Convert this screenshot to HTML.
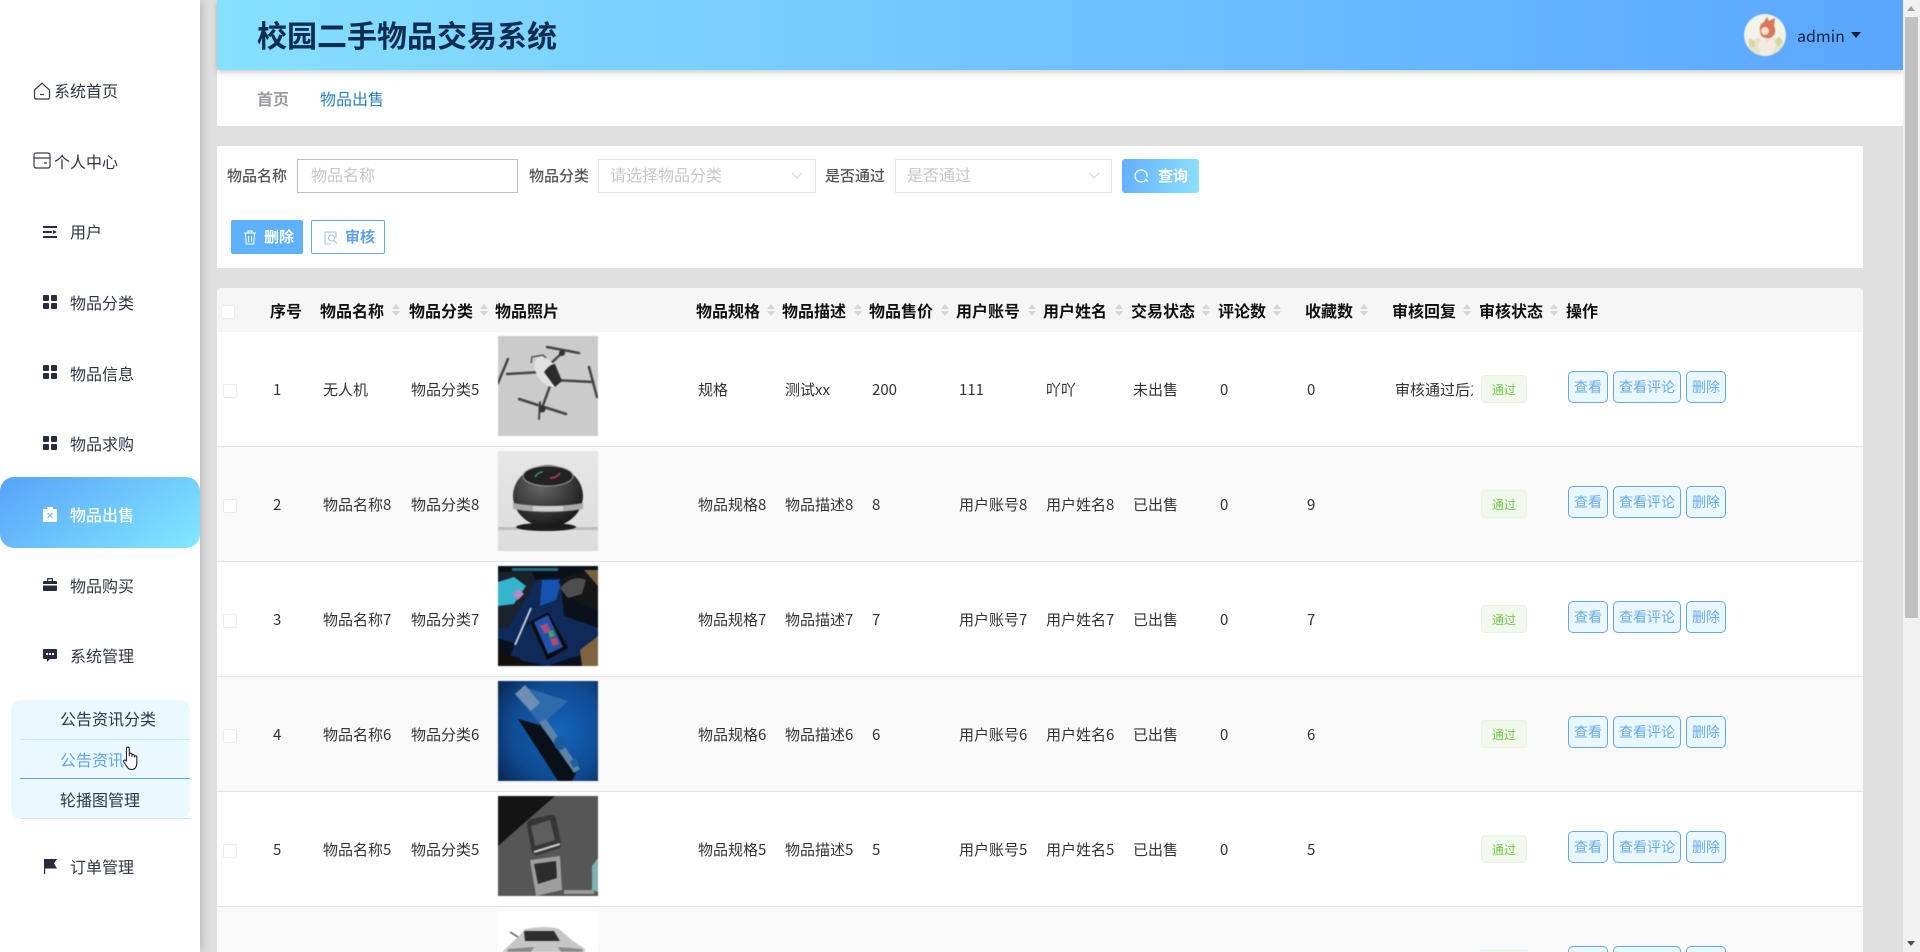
<!DOCTYPE html>
<html lang="zh"><head><meta charset="utf-8"><title>校园二手物品交易系统</title>
<style>
*{box-sizing:border-box}
html,body{margin:0;padding:0;width:1920px;height:952px;overflow:hidden;background:#e0e0e0;font-family:"Noto Sans CJK SC","Liberation Sans",sans-serif;color:#333}
#w{position:relative;width:1920px;height:952px;overflow:hidden;background:#e0e0e0}
.a{position:absolute;white-space:nowrap}
#side{position:absolute;left:0;top:0;width:200px;height:952px;background:#fff;box-shadow:3px 0 8px rgba(0,0,0,.16);z-index:5}
.m{position:absolute;left:70px;font-size:16px;line-height:24px;color:#2f3646;white-space:nowrap}
.i{position:absolute;left:43px}
#act{position:absolute;left:0;top:477px;width:200px;height:71px;border-radius:14px;background:linear-gradient(145deg,#58a2fa,#82e9ff)}
#sub{position:absolute;left:11px;top:700px;width:179px;height:119px;background:#e9f9ff;border-radius:10px}
.s{position:absolute;left:9px;width:170px;height:40px;border-bottom:1px solid #cfe6ee;font-size:16px;line-height:37px;padding-left:40px;color:#2f3646;white-space:nowrap}
#hd{position:absolute;left:217px;top:0;width:1686px;height:70px;background:linear-gradient(90deg,#86e0ff,#5aa6ff);box-shadow:0 2px 6px rgba(0,0,0,.22);z-index:3}
#bc{position:absolute;left:217px;top:70px;width:1686px;height:56px;background:#fff}
#sp{position:absolute;left:217px;top:146px;width:1646px;height:122px;background:#fff}
.lb{position:absolute;top:159px;line-height:34px;font-size:15px;font-weight:500;color:#555;white-space:nowrap}
.box{position:absolute;top:159px;height:34px;background:#fff;border:1px solid #e4e7ed;font-size:16px;line-height:28px;color:#c4c7cc;padding-left:11px;white-space:nowrap}
#th{position:absolute;left:217px;top:288px;width:1646px;height:44px;background:#f6f6f6;border-radius:4px 4px 0 0}
.h{position:absolute;top:288px;line-height:44px;font-size:16px;font-weight:700;color:#111;white-space:nowrap}
.so{position:absolute;top:304px;width:8px;height:11px}
.so:before{content:"";position:absolute;left:0;top:0;border-left:4px solid transparent;border-right:4px solid transparent;border-bottom:5px solid #d2d5d9}
.so:after{content:"";position:absolute;left:0;top:7px;border-left:4px solid transparent;border-right:4px solid transparent;border-top:5px solid #d2d5d9}
.cb{position:absolute;width:14px;height:14px;background:#fff;border:1px solid #ececec;border-radius:2px}
.r{position:absolute;left:217px;width:1646px;height:115px;background:#fff;border-bottom:1px solid #e4e4e4}
.r.e{background:#f9f9f9}
.r span{position:absolute;top:0;line-height:115px;font-size:15px;color:#333;white-space:nowrap}
.r svg{position:absolute;left:281px;top:4px;filter:blur(.45px)}
.r .cb{left:6px;top:52px}
.r b{position:absolute;top:39px;height:32px;border:1px solid #66a6e8;border-radius:5px;background:#e9f8ff;color:#68aaef;font-size:14px;font-weight:400;line-height:31px;text-align:center}
.r i{position:absolute;left:1264px;top:43px;width:46px;height:28px;background:#f0f9eb;border:1px solid #e8f4e0;border-radius:4px;color:#74c64c;font-size:12px;font-style:normal;line-height:28px;text-align:center}
.c1{left:56px}.c2{left:106px}.c3{left:194px}.c5{left:481px}.c6{left:568px}.c7{left:655px}.c8{left:742px}.c9{left:829px}.c10{left:916px}.c11{left:1003px}.c12{left:1090px}
.b1{left:1351px;width:40px}.b2{left:1396px;width:68px}.b3{left:1469px;width:40px}
.r.last{height:45px;border-bottom:0;overflow:hidden}
.r.last b{height:6px;border-bottom:0;overflow:hidden;border-radius:5px 5px 0 0}
.r.last i{height:2px;border-bottom:0;overflow:hidden}
#sb{position:absolute;left:1903px;top:0;width:17px;height:952px;background:#f1f1f1;z-index:6}
</style></head><body><div id="w">

<div id="side">
<svg class="a" style="left:33px;top:82px" width="18" height="18" viewBox="0 0 18 18" fill="none" stroke="#333a4a" stroke-width="1.2"><path d="M1.5 8 9 1.2 16.5 8v7.5a1.5 1.5 0 0 1-1.5 1.5H3a1.5 1.5 0 0 1-1.5-1.5z"/><path d="M7 12.5h4"/></svg>
<div class="a" style="left:54px;top:78px;font-size:16px;line-height:24px;color:#2f3646">系统首页</div>
<svg class="a" style="left:33px;top:152px" width="18" height="17" viewBox="0 0 18 17" fill="none" stroke="#333a4a" stroke-width="1.2"><rect x="1" y="1" width="16" height="15" rx="2"/><path d="M1 6h16M11 11h3"/></svg>
<div class="a" style="left:54px;top:149px;font-size:16px;line-height:24px;color:#2f3646">个人中心</div>

<svg class="i" style="top:226px" width="14" height="12" viewBox="0 0 14 12" fill="#262c3e"><rect width="14" height="2"/><rect y="5" width="9" height="2"/><path d="M10 4l4 2-4 2z"/><rect y="10" width="14" height="2"/></svg>
<div class="m" style="top:219px">用户</div>
<svg class="i" style="top:295px" width="14" height="14" viewBox="0 0 14 14" fill="#262c3e"><rect width="6" height="6" rx="1"/><rect x="8" width="6" height="6" rx="1"/><rect y="8" width="6" height="6" rx="1"/><rect x="8" y="8" width="6" height="6" rx="1"/></svg>
<div class="m" style="top:290px">物品分类</div>
<svg class="i" style="top:365px" width="14" height="14" viewBox="0 0 14 14" fill="#262c3e"><rect width="6" height="6" rx="1"/><rect x="8" width="6" height="6" rx="1"/><rect y="8" width="6" height="6" rx="1"/><rect x="8" y="8" width="6" height="6" rx="1"/></svg>
<div class="m" style="top:361px">物品信息</div>
<svg class="i" style="top:436px" width="14" height="14" viewBox="0 0 14 14" fill="#262c3e"><rect width="6" height="6" rx="1"/><rect x="8" width="6" height="6" rx="1"/><rect y="8" width="6" height="6" rx="1"/><rect x="8" y="8" width="6" height="6" rx="1"/></svg>
<div class="m" style="top:431px">物品求购</div>
<div id="act"></div>
<svg class="i" style="top:507px" width="14" height="15" viewBox="0 0 14 15"><path fill="#fff" d="M1 2h3V0h6v2h3a1 1 0 0 1 1 1v11a1 1 0 0 1-1 1H1a1 1 0 0 1-1-1V3a1 1 0 0 1 1-1z"/><path stroke="#6cb8f5" stroke-width="1.2" d="M4.5 6l5 5m0-5l-5 5"/></svg>
<div class="m" style="top:502px;color:#fff;font-weight:500">物品出售</div>
<svg class="i" style="top:578px" width="14" height="13" viewBox="0 0 14 13" fill="#262c3e"><path d="M4 3V1a1 1 0 0 1 1-1h4a1 1 0 0 1 1 1v2h3a1 1 0 0 1 1 1v2H0V4a1 1 0 0 1 1-1zM5.300 1.300V3h3.400V1.300zM0 7.500h14V12a1 1 0 0 1-1 1H1a1 1 0 0 1-1-1z"/></svg>
<div class="m" style="top:573px">物品购买</div>
<svg class="i" style="top:649px" width="14" height="13" viewBox="0 0 14 13" fill="#262c3e"><path fill-rule="evenodd" d="M1 0h12a1 1 0 0 1 1 1v8a1 1 0 0 1-1 1H7l-3 3v-3H1a1 1 0 0 1-1-1V1a1 1 0 0 1 1-1zM3 4v2h2V4zm3 0v2h2V4zm3 0v2h2V4z"/></svg>
<div class="m" style="top:643px">系统管理</div>
<div id="sub">
<div class="s" style="top:0">公告资讯分类</div>
<div class="s" style="top:39px;color:#5fa6ee;border-bottom-color:#64a5e6;line-height:41px">公告资讯</div>
<div class="s" style="top:79px;line-height:41px">轮播图管理</div>
</div>
<svg class="a" style="left:123px;top:746px" width="16" height="25" viewBox="0 0 16 25"><path fill="#fff" stroke="#222" stroke-width="1.100" stroke-linejoin="round" d="M3.500 15V2.500a1.400 1.400 0 0 1 2.800 0V10V8.500a1.300 1.300 0 0 1 2.600 0V10.500V9.500a1.300 1.300 0 0 1 2.500 0v1.500a1.200 1.200 0 0 1 2.400 0v6c0 4-2 6.500-5 6.500S5 22 3.500 20l-2.700-4c-.8-1.400 1-2.500 2-1.500z"/></svg>
<svg class="i" style="top:859px" width="14" height="15" viewBox="0 0 14 15" fill="#262c3e"><path d="M1 0h13l-3 4.500L14 9.500H2.200V15H1z"/></svg>
<div class="m" style="top:854px">订单管理</div>
</div>

<div id="hd">
<div class="a" style="left:40px;top:12px;font-size:30px;line-height:44px;font-weight:700;color:#0f2d50">校园二手物品交易系统</div>
<svg class="a" style="left:1527px;top:14px;filter:blur(.4px)" width="42" height="42" viewBox="0 0 42 42"><defs><clipPath id="av"><circle cx="21" cy="21" r="21"/></clipPath></defs><g clip-path="url(#av)"><rect width="42" height="42" fill="#f1f2e8"/><path d="M4 32q6-10 14-7l8 0q8-4 14 6v11H4z" fill="#e8e2cc"/><path d="M14 30l5-7 4 5 5-5 4 8-5 11H17z" fill="#f2ebe0"/><path d="M16 17q-1-7 4-9l3-5 2 4 6-3-1 8q3 6-1 10-3 3-7 2-6-1-6-7z" fill="#d9775a"/><circle cx="21" cy="17" r="4" fill="#f6dfcd"/><path d="M5 24l6 4-1 6-5-3zM35 22l4 6-5 5-3-5z" fill="#d5d99e"/></g></svg>
<div class="a" style="left:1580px;top:22px;font-size:16px;line-height:26px;color:#0f2340">admin</div>
<div class="a" style="left:1634px;top:32px;border-left:5px solid transparent;border-right:5px solid transparent;border-top:6px solid #0a1a30"></div>
</div>

<div id="bc">
<div class="a" style="left:40px;top:16px;font-size:16px;line-height:24px;font-weight:700;color:#9a9da3">首页</div>
<div class="a" style="left:103px;top:16px;font-size:16px;line-height:24px;font-weight:400;color:#2b80c2">物品出售</div>
</div>

<div id="sp"></div>
<div class="lb" style="left:227px">物品名称</div>
<div class="box" style="left:297px;width:221px;border-color:#bcbcbc;padding-left:13px">物品名称</div>
<div class="lb" style="left:529px">物品分类</div>
<div class="box" style="left:598px;width:218px">请选择物品分类</div>
<svg class="a" style="left:791px;top:172px" width="12" height="8" viewBox="0 0 12 8" fill="none" stroke="#d0d3d8"><path d="M1 1l5 5 5-5"/></svg>
<div class="lb" style="left:825px">是否通过</div>
<div class="box" style="left:895px;width:217px">是否通过</div>
<svg class="a" style="left:1088px;top:172px" width="12" height="8" viewBox="0 0 12 8" fill="none" stroke="#d0d3d8"><path d="M1 1l5 5 5-5"/></svg>
<div class="a" style="left:1122px;top:159px;width:77px;height:34px;border-radius:3px;background:linear-gradient(100deg,#63aeff,#8ce2ff);color:#fff;font-size:15px;font-weight:700;line-height:33px;padding-left:36px">查询</div>
<svg class="a" style="left:1134px;top:167px" width="16" height="16" viewBox="0 0 16 16" fill="none" stroke="#fff" stroke-width="1.200"><path d="M11 13.500A6 6 0 1 1 13 10"/><path d="M11 12l3 2.500"/></svg>
<div class="a" style="left:231px;top:220px;width:72px;height:34px;border-radius:2px;background:#5db1ff;color:#fff;font-size:15px;font-weight:700;line-height:34px;padding-left:33px">删除</div>
<svg class="a" style="left:243px;top:230px" width="14" height="15" viewBox="0 0 14 15" fill="none" stroke="#fff" stroke-width="1"><path d="M1 3h12M5 3V1h4v2M2.500 3l.7 11h7.600l.7-11M5.500 6v6M8.500 6v6"/></svg>
<div class="a" style="left:311px;top:220px;width:74px;height:34px;border-radius:2px;background:#fff;border:1px solid #62a9ee;color:#62a2e8;font-size:15px;font-weight:700;line-height:32px;padding-left:33px">审核</div>
<svg class="a" style="left:324px;top:231px" width="14" height="14" viewBox="0 0 14 14" fill="none" stroke="#a8bdf0" stroke-width="1"><path d="M12 7V1H1v12h6"/><circle cx="7.500" cy="7" r="3"/><path d="M10 9.500l3 3"/></svg>

<div id="th"></div>
<div class="cb" style="left:221px;top:305px"></div>
<div class="h" style="left:270px">序号</div>
<div class="h" style="left:320px">物品名称</div><div class="so" style="left:392px"></div>
<div class="h" style="left:409px">物品分类</div><div class="so" style="left:480px"></div>
<div class="h" style="left:495px">物品照片</div>
<div class="h" style="left:696px">物品规格</div><div class="so" style="left:767px"></div>
<div class="h" style="left:782px">物品描述</div><div class="so" style="left:854px"></div>
<div class="h" style="left:869px">物品售价</div><div class="so" style="left:941px"></div>
<div class="h" style="left:956px">用户账号</div><div class="so" style="left:1028px"></div>
<div class="h" style="left:1043px">用户姓名</div><div class="so" style="left:1115px"></div>
<div class="h" style="left:1131px">交易状态</div><div class="so" style="left:1202px"></div>
<div class="h" style="left:1218px">评论数</div><div class="so" style="left:1273px"></div>
<div class="h" style="left:1305px">收藏数</div><div class="so" style="left:1360px"></div>
<div class="h" style="left:1392px">审核回复</div><div class="so" style="left:1463px"></div>
<div class="h" style="left:1479px">审核状态</div><div class="so" style="left:1550px"></div>
<div class="h" style="left:1566px">操作</div>

<div class="r" style="top:332px"><div class="cb"></div>
<span class="c1">1</span><span class="c2">无人机</span><span class="c3">物品分类5</span>
<svg width="100" height="100" viewBox="0 0 100 100"><rect width="100" height="100" fill="#cbcbcb"/><g stroke="#454545" stroke-linecap="round" fill="none"><path stroke-width="2.500" d="M44 36 9 38M56 44 95 46M52 50 44 72M50 30 64 17"/><path stroke-width="2.500" d="M0 47 10 23M91 31 99 61M21 63 68 78M49 11 81 17"/><path stroke-width="2" d="M42 66 41 83"/></g><ellipse cx="49" cy="36" rx="10" ry="17" transform="rotate(-35 49 36)" fill="#e2e2e4"/><path d="M46 36q6-8 11-8l7 17-7 6z" fill="#2b2b2b"/><path d="M33 27l1-6 11-2 3 3" stroke="#555" stroke-width="1.500" fill="none"/><circle cx="44" cy="73" r="3.500" fill="#333"/><circle cx="64" cy="17" r="3" fill="#333"/></svg>
<span class="c5">规格</span><span class="c6">测试xx</span><span class="c7">200</span><span class="c8">111</span><span class="c9">吖吖</span><span class="c10">未出售</span><span class="c11">0</span><span class="c12">0</span>
<span style="left:1178px;width:78px;overflow:hidden">审核通过后之</span><i>通过</i>
<b class="b1">查看</b><b class="b2">查看评论</b><b class="b3">删除</b></div>

<div class="r e" style="top:447px"><div class="cb"></div>
<span class="c1">2</span><span class="c2">物品名称8</span><span class="c3">物品分类8</span>
<svg width="100" height="100" viewBox="0 0 100 100"><defs><linearGradient id="g1" x1="0" y1="0" x2="0" y2="1"><stop offset="0" stop-color="#e6e6e6"/><stop offset="1" stop-color="#dcdcdc"/></linearGradient><radialGradient id="g2" cx=".4" cy=".3" r=".75"><stop offset="0" stop-color="#6a6a6a"/><stop offset="1" stop-color="#141414"/></radialGradient></defs><rect width="100" height="100" fill="url(#g1)"/><rect y="76" width="100" height="3" fill="#bdbdbd"/><ellipse cx="48" cy="76" rx="30" ry="4" fill="#1c1c1c"/><ellipse cx="50" cy="45" rx="35" ry="31" fill="url(#g2)"/><path d="M15 52q35 6 70 0v6q-35 6-70 0z" fill="#a8a8a8"/><path d="M35 55h30v5H35z" fill="#d0d0d0"/><ellipse cx="50" cy="25" rx="25" ry="10" fill="#222" stroke="#9c9c9c" stroke-width="1"/><path d="M37 26q3-5 8-5" stroke-width="1.500" fill="none" stroke="#2f9a78"/><path d="M52 27q7 0 10-5" stroke-width="1.500" fill="none" stroke="#c43a5a"/></svg>
<span class="c5">物品规格8</span><span class="c6">物品描述8</span><span class="c7">8</span><span class="c8">用户账号8</span><span class="c9">用户姓名8</span><span class="c10">已出售</span><span class="c11">0</span><span class="c12">9</span><i>通过</i>
<b class="b1">查看</b><b class="b2">查看评论</b><b class="b3">删除</b></div>

<div class="r" style="top:562px"><div class="cb"></div>
<span class="c1">3</span><span class="c2">物品名称7</span><span class="c3">物品分类7</span>
<svg width="100" height="100" viewBox="0 0 100 100"><rect width="100" height="100" fill="#0b111b"/><path d="M38 14 62 14 50 46 30 56 18 78 0 72V62z" fill="#0e2a5a"/><path d="M38 14 62 12 66 50 100 62V84L72 92 50 100 12 92 18 74 32 56z" fill="#0f2a58"/><path d="M44 14H64L58 34 42 40z" fill="#1454b0"/><path d="M82 84 100 70V100H84z" fill="#7d6340"/><path d="M0 86 22 92 24 100H0z" fill="#15100c"/><path d="M60 16q18-14 40-8V44L78 36z" fill="#161616"/><path d="M62 22q12-14 26-8l-4 14-14 4z" fill="#4e4e4e"/><path d="M86 4h14v16z" fill="#7a6040"/><path d="M14 2h46v3H14z" fill="#1f6f7e"/><path d="M0 6H34L38 16 10 62H0z" fill="#1a222c"/><path d="M0 16 16 11 28 20 16 38 0 40z" fill="#35b5cc"/><path d="M14 28l7-5 5 5-6 6z" fill="#b58ac8"/><path d="M33 42 17 79" stroke="#cfd4da" stroke-width="1.800"/><path d="M32 56 50 46 70 82 49 94z" fill="#0c0c0c"/><path d="M36 56 50 49 65 81 50 88z" fill="#2352ae"/><path d="M42 60l7-3 4 8-6 3z" fill="#a8497c"/><path d="M52 73l6-2 3 7-6 2z" fill="#b44a6a"/><path d="M50 66l5-2 2 6-5 2z" fill="#41a35a"/></svg>
<span class="c5">物品规格7</span><span class="c6">物品描述7</span><span class="c7">7</span><span class="c8">用户账号7</span><span class="c9">用户姓名7</span><span class="c10">已出售</span><span class="c11">0</span><span class="c12">7</span><i>通过</i>
<b class="b1">查看</b><b class="b2">查看评论</b><b class="b3">删除</b></div>

<div class="r e" style="top:677px"><div class="cb"></div>
<span class="c1">4</span><span class="c2">物品名称6</span><span class="c3">物品分类6</span>
<svg width="100" height="100" viewBox="0 0 100 100"><defs><radialGradient id="g3" cx=".6" cy=".5" r=".8"><stop offset="0" stop-color="#1565bb"/><stop offset=".6" stop-color="#0f4a92"/><stop offset="1" stop-color="#08234a"/></radialGradient></defs><rect width="100" height="100" fill="url(#g3)"/><path d="M20 38 42 44 78 92 74 100H60z" fill="#0a1018"/><path d="M26 6 70 20 46 42 40 40 17 13z" fill="#2e6bab"/><path d="M17 13 27 4 42 22 33 30z" fill="#6e8fb2"/><path d="M41 41 48 38 82 88 76 92z" fill="#5d82a8"/><ellipse cx="62" cy="62" rx="6" ry="7" fill="#1d5a9c"/><path d="M72 80l6-3 3 7-6 3z" fill="#24609f"/></svg>
<span class="c5">物品规格6</span><span class="c6">物品描述6</span><span class="c7">6</span><span class="c8">用户账号6</span><span class="c9">用户姓名6</span><span class="c10">已出售</span><span class="c11">0</span><span class="c12">6</span><i>通过</i>
<b class="b1">查看</b><b class="b2">查看评论</b><b class="b3">删除</b></div>

<div class="r" style="top:792px"><div class="cb"></div>
<span class="c1">5</span><span class="c2">物品名称5</span><span class="c3">物品分类5</span>
<svg width="100" height="100" viewBox="0 0 100 100"><rect width="100" height="100" fill="#565656"/><path d="M0 0H57L0 50z" fill="#141414"/><path d="M32 64 62 60 64 94 38 100z" fill="#9e9e9e"/><path d="M36 68 58 65 59 82 40 88z" fill="#2c2c2c"/><path d="M29 30q-1-5 4-7l19-4q5-1 6 4l5 24q1 5-4 6l-19 6q-5 1-6-3z" fill="#363636"/><path d="M33 30l19-6 5 20-20 6z" fill="#5e5e5e"/><path d="M36 56l26-8" stroke="#d0d0d0" stroke-width="2"/><path d="M66 94h30v4H66z" fill="#9a9a9a"/><path d="M94 70l6-8V96l-6-2z" fill="#80b0b0"/></svg>
<span class="c5">物品规格5</span><span class="c6">物品描述5</span><span class="c7">5</span><span class="c8">用户账号5</span><span class="c9">用户姓名5</span><span class="c10">已出售</span><span class="c11">0</span><span class="c12">5</span><i>通过</i>
<b class="b1">查看</b><b class="b2">查看评论</b><b class="b3">删除</b></div>

<div class="r e last" style="top:907px">
<svg width="100" height="41" viewBox="0 0 100 41"><rect width="100" height="41" fill="#fff"/><path d="M20 26 27 18q22-4 34 0l14 12 12 8V41H5V40z" fill="#c6c6c6"/><path d="M26 20 56 20 62 30H27z" fill="#2f2f2f"/><path d="M10 38 36 36 33 41H9zM60 36 84 38 85 41H63z" fill="#8a8a8a"/><path d="M12 21l8 5" stroke="#555" stroke-width="1.500"/></svg>
<i></i>
<b class="b1"></b><b class="b2"></b><b class="b3"></b></div>

<div id="sb">
<div class="a" style="left:2px;top:17px;width:13px;height:601px;background:#c1c1c1"></div>
<div class="a" style="left:4px;top:6px;border-left:4px solid transparent;border-right:4px solid transparent;border-bottom:5px solid #a3a3a3"></div>
<div class="a" style="left:4px;top:941px;border-left:4px solid transparent;border-right:4px solid transparent;border-top:5px solid #505050"></div>
</div>
</div></body></html>
